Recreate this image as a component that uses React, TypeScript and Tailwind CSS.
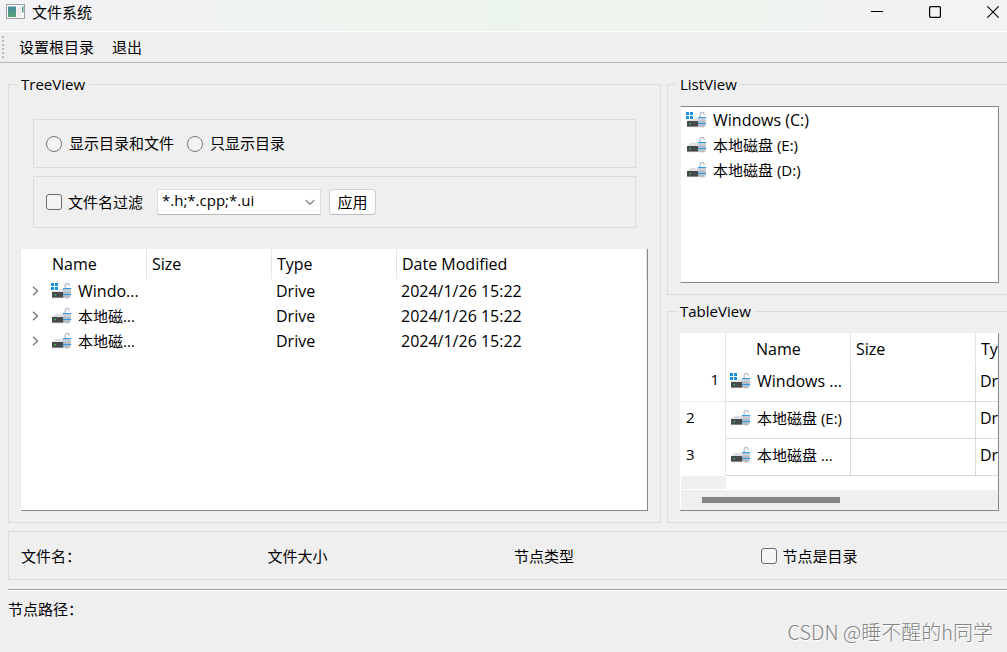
import { useState } from 'react'
import type { ReactNode } from 'react'

// the tree and the table have narrow name columns, so each keeps its own short label
type Drive = { name: string; treeName: string; tableName: string; system?: boolean }

const driveC: Drive = { name: 'Windows (C:)', treeName: 'Windo...', tableName: 'Windows ...', system: true }
const driveD: Drive = { name: '本地磁盘 (D:)', treeName: '本地磁...', tableName: '本地磁盘 ...' }
const driveE: Drive = { name: '本地磁盘 (E:)', treeName: '本地磁...', tableName: '本地磁盘 (E:)' }

const treeDrives = [driveC, driveD, driveE]
const drives = [driveC, driveE, driveD]

const checkClass =
  'size-4 shrink-0 appearance-none rounded-[3px] border border-[#6b6b6b] bg-[#f5f5f5] checked:bg-[#0067c0]'
const radioClass =
  'size-4 shrink-0 appearance-none rounded-full border border-[#777777] bg-[#f3f3f3] checked:border-4 checked:border-[#0067c0]'

function AppIcon() {
  return (
    <svg width="20" height="16" viewBox="0 0 20 16" aria-hidden="true">
      <defs>
        <linearGradient id="pane" x1="0" y1="0" x2="0" y2="1">
          <stop offset="0" stopColor="#4a86a8" />
          <stop offset="1" stopColor="#55a56d" />
        </linearGradient>
      </defs>
      <rect x="0.5" y="0.5" width="18" height="14" fill="#fbfbfb" stroke="#9a9fa6" />
      <rect x="2" y="2.5" width="8" height="10.5" fill="url(#pane)" />
      <rect x="10.5" y="2.5" width="4.5" height="10.5" fill="#ececec" />
      <rect x="16" y="2.5" width="1.5" height="6" fill="url(#pane)" />
    </svg>
  )
}

function DriveIcon({ system }: { system?: boolean }) {
  return (
    <svg className="shrink-0" width="21" height="18" viewBox="0 0 21 18" aria-hidden="true">
      <path d="M1 10.2 L4.5 6.8 H12.5 V10.2 Z" fill="#dfe1e4" />
      <rect x="1" y="10" width="11.5" height="5.7" fill="#474a4c" />
      <path d="M1 15.6 H12.5" stroke="#8c8f91" strokeWidth="0.7" />
      <rect x="3.6" y="12" width="1.3" height="1.3" fill="#3ee04a" />
      <path d="M14.2 6.5 V3.6 Q14.2 1.4 16.2 1.4 Q18.2 1.4 18.2 3.8" fill="none" stroke="#b4bfcb" strokeWidth="1.3" />
      <path d="M12.3 6.6 H19.9 V13 Q19.5 16.6 16.1 16.6 Q12.7 16.6 12.3 13 Z" fill="#b4bdc7" />
      <path d="M12.3 7.2 H19.9 V9.6 H12.3 Z" fill="#c8cfd7" />
      <path d="M12 6.5 H20.2 M12 12.5 H20.2" stroke="#2f9be0" strokeWidth="1" />
      {system && (
        <>
          <path d="M0 0 H8 V9 H0 Z" fill="#ffffff" />
          <path d="M0 1 H3 V4 H0 Z M4 1 H7 V4 H4 Z M0 5 H3 V8 H0 Z M4 5 H7 V8 H4 Z" fill="#1490df" />
        </>
      )}
    </svg>
  )
}

function Group({ title, className, children }: { title: string; className: string; children: ReactNode }) {
  return (
    <fieldset className={`flex min-w-0 flex-col border border-[#dcdcdc] px-3 ${className}`}>
      <legend className="-ml-1 h-5 px-1 leading-5">{title}</legend>
      {children}
    </fieldset>
  )
}

function TitleBar() {
  return (
    <header className="flex h-8 items-start border-b border-white bg-linear-to-r from-[#f3f2f5] via-[#ecf5ec] to-[#f3f3f3] pl-[6px]">
      <div className="flex h-6 items-center gap-[6px]">
        <AppIcon />
        <h1>文件系统</h1>
      </div>
      <div className="ml-auto flex h-6 gap-[30px]">
        <button aria-label="Minimize" className="flex w-7 items-center justify-center">
          <svg width="12" height="12" viewBox="0 0 12 12"><path d="M0 5.5 H12" stroke="#000" /></svg>
        </button>
        <button aria-label="Maximize" className="flex w-7 items-center justify-center">
          <svg width="12" height="12" viewBox="0 0 12 12"><rect x="0.6" y="0.6" width="10.8" height="10.8" rx="1" fill="none" stroke="#000" strokeWidth="1.2" /></svg>
        </button>
        <button aria-label="Close" className="flex w-7 items-center justify-center">
          <svg width="12" height="12" viewBox="0 0 12 12"><path d="M0.3 0.3 L11.7 11.7 M11.7 0.3 L0.3 11.7" stroke="#000" strokeWidth="1.1" /></svg>
        </button>
      </div>
    </header>
  )
}

function ToolBar() {
  return (
    <nav className="flex h-[31px] items-center border-b border-[#b8b8b8] pl-[2px]">
      <svg width="2" height="23" viewBox="0 0 2 23" aria-hidden="true">
        <path d="M1 0 V23" stroke="#b8b8b8" strokeWidth="2" strokeDasharray="2 2" />
      </svg>
      <div className="flex gap-[18px] pl-[15px]">
        <button>设置根目录</button>
        <button>退出</button>
      </div>
    </nav>
  )
}

function Filters() {
  const [useFilter, setUseFilter] = useState(false)
  return (
    <div className="mx-3 mb-[21px] flex flex-col gap-2">
      <div className="flex items-center gap-[13px] border border-[#dcdcdc] p-3">
        <label className="flex items-center gap-[7px] leading-[23px]">
          <input type="radio" name="mode" className={radioClass} />
          显示目录和文件
        </label>
        <label className="flex items-center gap-[7px] leading-[23px]">
          <input type="radio" name="mode" className={radioClass} />
          只显示目录
        </label>
      </div>
      <div className="flex items-center border border-[#dcdcdc] p-3">
        <label className="mr-[14px] flex items-center gap-[6px]">
          <input
            type="checkbox"
            className={checkClass}
            checked={useFilter}
            onChange={(e) => setUseFilter(e.target.checked)}
          />
          文件名过滤
        </label>
        <div className="relative mr-2">
          <select
            aria-label="文件名过滤"
            className="h-[26px] w-[164px] appearance-none border border-[#dedede] border-b-[#b8b8b8] bg-white pb-1 pl-1 leading-5"
          >
            <option>*.h;*.cpp;*.ui</option>
            <option>*.h</option>
            <option>*.cpp</option>
          </select>
          <svg className="pointer-events-none absolute top-[10px] right-[6px]" width="10" height="7" viewBox="0 0 10 7">
            <path d="M0.7 1 L5 5.3 L9.3 1" fill="none" stroke="#8a8a8a" strokeWidth="1.3" />
          </svg>
        </div>
        <button className="h-[26px] w-[47px] rounded-[4px] border border-[#d0d0d0] border-b-[#bdbdbd] bg-[#fdfdfd]">
          应用
        </button>
      </div>
    </div>
  )
}

function TreeTable() {
  return (
    <div className="flex-1 overflow-hidden border-r border-b border-[#828790] bg-white">
      <table className="w-full table-fixed border-separate border-spacing-0 text-left">
        <colgroup>
          <col className="w-[126px]" />
          <col className="w-[125px]" />
          <col className="w-[125px]" />
          <col />
        </colgroup>
        <thead className="text-base leading-5">
          <tr className="h-[30px]">
            <th className="border-r border-[#e5e5e5] pl-[31px] font-normal">Name</th>
            <th className="border-r border-[#e5e5e5] pl-[5px] font-normal">Size</th>
            <th className="border-r border-[#e5e5e5] pl-[5px] font-normal">Type</th>
            <th className="border-r border-[#e5e5e5] pl-[5px] font-normal">Date Modified</th>
          </tr>
        </thead>
        <tbody>
          {treeDrives.map((d) => (
            <tr key={d.name} className="h-[25px]">
              <td className="pb-[2px] pl-[10px]">
                <div className="flex items-center">
                  <svg className="mr-[11px] shrink-0" width="9" height="10" viewBox="0 0 9 10" aria-hidden="true">
                    <path d="M2 0.7 L6.5 5 L2 9.3" fill="none" stroke="#7a7a7a" strokeWidth="1.4" />
                  </svg>
                  <DriveIcon system={d.system} />
                  <span className={d.system ? 'ml-[6px] text-base leading-5' : 'ml-[6px]'}>{d.treeName}</span>
                </div>
              </td>
              <td />
              <td className="pb-[2px] pl-1 text-base leading-5">Drive</td>
              <td className="pb-[2px] pl-1 text-base leading-5">2024/1/26 15:22</td>
            </tr>
          ))}
        </tbody>
      </table>
    </div>
  )
}

function ListView() {
  return (
    <ul className="h-[177px] border border-[#828790] border-l-[#f0f0f0] bg-white pl-[5px]">
      {drives.map((d) => (
        <li key={d.name} className="flex h-[25px] items-center gap-[6px]">
          <DriveIcon system={d.system} />
          <span className={d.system ? 'text-base leading-5' : ''}>{d.name}</span>
        </li>
      ))}
    </ul>
  )
}

function TableView() {
  return (
    <div className="flex flex-1 flex-col overflow-hidden border-r border-b border-[#828790] bg-white">
      <table className="w-[546px] table-fixed border-separate border-spacing-0 text-left">
        <colgroup>
          <col className="w-[46px]" />
          <col className="w-[125px]" />
          <col className="w-[125px]" />
          <col className="w-[125px]" />
          <col className="w-[125px]" />
        </colgroup>
        <thead className="text-base leading-5">
          <tr className="h-8">
            <td className="border-r border-[#e5e5e5]" />
            <th className="border-r border-[#e5e5e5] pl-[30px] font-normal">Name</th>
            <th className="border-r border-[#e5e5e5] pl-[5px] font-normal">Size</th>
            <th className="border-r border-[#e5e5e5] pl-[5px] font-normal">Type</th>
            <th className="pl-[5px] font-normal">Date Modified</th>
          </tr>
        </thead>
        <tbody>
          {drives.map((d, i) => (
            <tr key={d.name} className="h-[37px]">
              <th
                className={
                  i === 0
                    ? 'border-r border-b border-r-[#e5e5e5] border-b-[#efefef] pr-[6px] pb-2 text-right font-normal'
                    : 'border-r border-[#e5e5e5] pb-2 pl-[6px] font-normal'
                }
              >
                {i + 1}
              </th>
              <td className="border-r border-b border-[#d8d8d8] pb-1 pl-1">
                <div className="flex items-center gap-[6px]">
                  <DriveIcon system={d.system} />
                  <span className={d.system ? 'text-base leading-5' : ''}>{d.tableName}</span>
                </div>
              </td>
              <td className="border-r border-b border-[#d8d8d8]" />
              <td className="border-r border-b border-[#d8d8d8] pb-1 pl-1 text-base leading-5">Drive</td>
              <td className="border-b border-[#d8d8d8] pb-1 pl-1 text-base leading-5">2024/1/26 15:22</td>
            </tr>
          ))}
        </tbody>
      </table>
      <div className="ml-px w-[45px] flex-1 bg-[#efefef]" />
      <div className="mt-px ml-px flex h-5 items-center bg-[#efefef] pl-[21px]">
        <div className="h-[6px] w-[138px] bg-[#858585]" />
      </div>
    </div>
  )
}

export default function App() {
  return (
    <div className="flex min-h-screen flex-col bg-[#efefef] font-['Open_Sans','Noto_Sans_CJK_SC',sans-serif] text-[15px] leading-5 text-black">
      <TitleBar />
      <ToolBar />
      <main className="flex flex-1 flex-col pl-2">
        <div className="flex flex-1 gap-[6px] pt-[11px]">
          <Group title="TreeView" className="flex-1 pt-[25px] pb-[11px]">
            <Filters />
            <TreeTable />
          </Group>
          <div className="flex w-[340px] flex-col gap-[6px]">
            <Group title="ListView" className="border-r-0 pt-3 pr-2 pb-[11px]">
              <ListView />
            </Group>
            <Group title="TableView" className="flex-1 border-r-0 pt-3 pr-2 pb-[11px]">
              <TableView />
            </Group>
          </div>
        </div>
        <div className="mt-2 mb-[9px] grid h-[49px] grid-cols-4 items-center border border-r-0 border-[#dcdcdc] pl-3">
          <span>文件名：</span>
          <span>文件大小</span>
          <span>节点类型</span>
          <label className="flex items-center gap-[6px]">
            <input type="checkbox" className={checkClass} />
            节点是目录
          </label>
        </div>
        <hr className="h-[2px] border-t border-b border-t-[#a0a0a0] border-b-white" />
      </main>
      <footer className="flex h-[61px] justify-between pr-[14px] pl-2">
        <span className="pt-2">节点路径：</span>
        <span className="self-end pb-2 font-['Noto_Sans_CJK_SC',sans-serif] text-[20px] leading-6 font-light text-[#848484] [text-shadow:1px_1px_0_#ffffff]">
          CSDN @睡不醒的h同学
        </span>
      </footer>
    </div>
  )
}
